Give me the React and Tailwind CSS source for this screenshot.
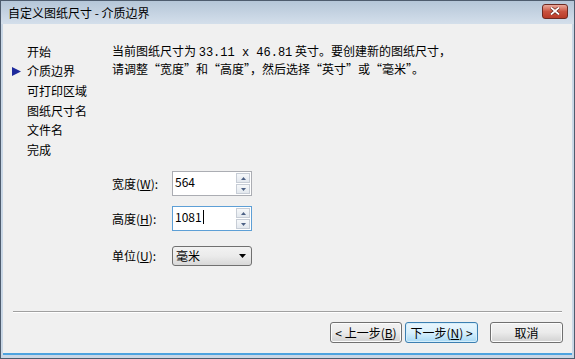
import React from "react";

const F = { fontFamily: '"Noto Sans CJK SC", "Noto Sans", sans-serif' };

function Spin({ value, focused }) {
  return (
    <div className={`flex w-[80px] h-[25px] bg-white border ${focused ? "border-[#5d9fd6]" : "border-[#abadb3]"}`}>
      <div className="flex-1 pl-[2px] pt-[3px] text-[12px] leading-[14px] text-black flex items-start">
        <span>{value}</span>
        {focused && <span className="inline-block w-[1px] h-[14px] bg-black ml-[1px]" />}
      </div>
      <div className="w-[16px] flex flex-col gap-[1px] p-[1px]">
        <div className="flex-1 border border-[#c7cdd6] bg-gradient-to-b from-[#f6f8fa] to-[#e3e8ee] flex items-center justify-center">
          <svg width="5" height="3" viewBox="0 0 5 3"><path d="M2.5 0L5 3H0z" fill="#4d6185" /></svg>
        </div>
        <div className="flex-1 border border-[#c7cdd6] bg-gradient-to-b from-[#f6f8fa] to-[#e3e8ee] flex items-center justify-center">
          <svg width="5" height="3" viewBox="0 0 5 3"><path d="M0 0H5L2.5 3z" fill="#4d6185" /></svg>
        </div>
      </div>
    </div>
  );
}

function Btn({ children, def, w = "w-[72px]" }) {
  return (
    <div
      className={`${w} h-[21px] rounded-[3px] border flex items-center justify-center text-[12px] leading-none text-black ${
        def
          ? "border-[#3c7fb1] bg-gradient-to-b from-[#eaf6fd] via-[#d9f0fc] to-[#a7d9f5] shadow-[inset_0_0_0_1px_#d4eefb]"
          : "border-[#707070] bg-gradient-to-b from-[#f2f2f2] via-[#ebebeb] to-[#d1d1d1] shadow-[inset_0_0_0_1px_#fcfcfc]"
      }`}
    >
      {children}
    </div>
  );
}

function Row({ label, k, children, mt }) {
  return (
    <div className={`flex items-center ${mt}`}>
      <div className="w-[60px] text-[12px] leading-none text-black">
        {label}(<u>{k}</u>):
      </div>
      {children}
    </div>
  );
}

export default function App() {
  const nav = ["开始", "介质边界", "可打印区域", "图纸尺寸名", "文件名", "完成"];
  return (
    <div style={F} className="w-[575px] h-[359px] flex flex-col bg-[#c9d7e6] border border-[#4e5c6e] overflow-hidden">
      <div className="h-[23px] flex items-center justify-between pl-[7px] pr-[6px] bg-gradient-to-b from-[#b5c6d8] to-[#d4dfeb]">
        <span className="text-[12px] leading-none text-black">自定义图纸尺寸 - 介质边界</span>
        <div className="w-[26px] h-[15px] mt-[-3px] rounded-[3px] border border-[#6e2a21] bg-gradient-to-b from-[#e9a99c] via-[#c9523f] to-[#b83b28] flex items-center justify-center">
          <svg width="10" height="8" viewBox="0 0 10 8">
            <path d="M1 0.5L9 7.5M9 0.5L1 7.5" stroke="#5a1c12" strokeWidth="3" />
            <path d="M1 0.5L9 7.5M9 0.5L1 7.5" stroke="#ffffff" strokeWidth="1.8" />
          </svg>
        </div>
      </div>
      <div className="flex-1 mx-[2px] mb-[3px] bg-[#f0f0f0] flex flex-col border-b-[2px] border-b-[#4da3df]">
        <div className="flex flex-1">
          <div className="w-[109px] pt-[18px] pl-[9px]">
            {nav.map((n, i) => (
              <div key={n} className="h-[19.6px] flex items-center text-[12px] leading-none text-black">
                <span className="w-[15px] flex items-center">
                  {i === 1 && (
                    <svg width="9" height="9" viewBox="0 0 9 9"><path d="M0 0L9 4.5L0 9z" fill="#1e2a9c" /></svg>
                  )}
                </span>
                {n}
              </div>
            ))}
          </div>
          <div className="flex-1 pt-[19px]">
            <div className="text-[12px] leading-[15px] text-black">
              <div>当前图纸尺寸为 <span style={{ fontFamily: '"Liberation Mono", monospace', fontSize: "12px" }}>33.11 x 46.81</span> 英寸。要创建新的图纸尺寸，</div>
              <div>请调整“宽度”和“高度”，然后选择“英寸”或“毫米”。</div>
            </div>
            <div className="mt-[95px]">
              <Row label="宽度" k="W">
                <Spin value="564" />
              </Row>
              <Row label="高度" k="H" mt="mt-[10px]">
                <Spin value="1081" focused />
              </Row>
              <Row label="单位" k="U" mt="mt-[15px]">
                <div className="w-[80px] h-[20px] rounded-[3px] border border-[#707070] bg-gradient-to-b from-[#f2f2f2] via-[#ebebeb] to-[#d8d8d8] flex items-center justify-between pl-[3px] pr-[5px] text-[12px] leading-none text-black">
                  <span>毫米</span>
                  <svg width="7" height="4" viewBox="0 0 7 4"><path d="M0 0H7L3.5 4z" fill="#000" /></svg>
                </div>
              </Row>
            </div>
          </div>
        </div>
        <div className="mx-[10px] h-[2px] border-t border-t-[#a0a0a0] border-b border-b-white" />
        <div className="h-[40px] flex items-center justify-end pr-[9px] pb-[1px]">
          <Btn>&lt; 上一步(<u>B</u>)</Btn>
          <div className="w-[3px]" />
          <Btn def w="w-[73px]">下一步(<u>N</u>) &gt;</Btn>
          <div className="w-[12px]" />
          <Btn w="w-[73px]">取消</Btn>
        </div>
      </div>
    </div>
  );
}
